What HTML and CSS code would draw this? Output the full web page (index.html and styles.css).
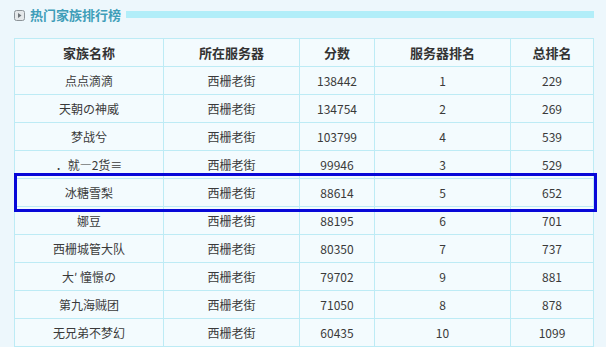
FILE: index.html
```html
<!DOCTYPE html>
<html lang="zh">
<head>
<meta charset="utf-8">
<link rel="stylesheet" href="styles.css">
</head>
<body>
<div class="page">
  <div class="title-row">
    <span class="title-icon"><svg width="11" height="11" viewBox="0 0 11 11"><rect x="0.5" y="0.5" width="10" height="10" rx="2" fill="#e4e8ea" stroke="#8c9398"/><path d="M4 3 L7.5 5.5 L4 8 Z" fill="#6d7479"/></svg></span>
    <h2 class="title">热门家族排行榜</h2>
    <span class="title-bar"></span>
  </div>
  <div class="table-wrap">
    <table class="rank">
      <colgroup>
        <col class="c1"><col class="c2"><col class="c3"><col class="c4"><col class="c5">
      </colgroup>
      <thead>
        <tr><th>家族名称</th><th>所在服务器</th><th>分数</th><th>服务器排名</th><th>总排名</th></tr>
      </thead>
      <tbody>
        <tr><td>点点滴滴</td><td>西栅老街</td><td>138442</td><td>1</td><td>229</td></tr>
        <tr><td>天朝の神威</td><td>西栅老街</td><td>134754</td><td>2</td><td>269</td></tr>
        <tr><td>梦战兮</td><td>西栅老街</td><td>103799</td><td>4</td><td>539</td></tr>
        <tr><td>．就—2货≡</td><td>西栅老街</td><td>99946</td><td>3</td><td>529</td></tr>
        <tr><td>冰糖雪梨</td><td>西栅老街</td><td>88614</td><td>5</td><td>652</td></tr>
        <tr><td>娜豆</td><td>西栅老街</td><td>88195</td><td>6</td><td>701</td></tr>
        <tr><td>西栅城管大队</td><td>西栅老街</td><td>80350</td><td>7</td><td>737</td></tr>
        <tr><td>大′ 憧憬の</td><td>西栅老街</td><td>79702</td><td>9</td><td>881</td></tr>
        <tr><td>第九海贼团</td><td>西栅老街</td><td>71050</td><td>8</td><td>878</td></tr>
        <tr><td>无兄弟不梦幻</td><td>西栅老街</td><td>60435</td><td>10</td><td>1099</td></tr>
      </tbody>
    </table>
    <div class="highlight"></div>
  </div>
</div>
</body>
</html>
```
FILE: styles.css
```css
html, body {
  margin: 0;
  padding: 0;
  background: #edf7fc;
}
body {
  font-family: "Noto Sans CJK SC", "Noto Sans", sans-serif;
  color: #333;
  width: 606px;
  height: 347px;
  overflow: hidden;
}
.page {
  padding-left: 14px;
}
.title-row {
  display: flex;
  align-items: center;
  height: 29px;
  width: 580px;
}
.title-icon {
  display: flex;
  width: 11px;
  height: 11px;
  margin-top: 1px;
}
.title {
  margin: 0 0 0 5px;
  font-size: 13px;
  font-weight: bold;
  color: #3f9eb9;
  line-height: 16px;
}
.title-bar {
  flex: 1;
  height: 7px;
  background: #b2eef9;
  margin-left: 5px;
}
.table-wrap {
  position: relative;
  margin-top: 9px;
  width: 580px;
}
.rank {
  border-collapse: collapse;
  width: 580px;
  table-layout: fixed;
  background: #f3fbfe;
}
.c1 { width: 149px; }
.c2 { width: 136px; }
.c3 { width: 75px; }
.c4 { width: 136px; }
.c5 { width: 83px; }
.rank th, .rank td {
  border: 1px solid #bdebf5;
  height: 27px;
  padding: 0;
  text-align: center;
  font-size: 12px;
  line-height: 14px;
  white-space: nowrap;
}
.rank th {
  font-size: 13px;
  font-weight: bold;
  color: #333;
}
.rank td {
  color: #3a3a3a;
}
.highlight {
  position: absolute;
  left: 0;
  top: 135px;
  width: 577px;
  height: 33px;
  border: 3px solid #0808d8;
  pointer-events: none;
}
```
